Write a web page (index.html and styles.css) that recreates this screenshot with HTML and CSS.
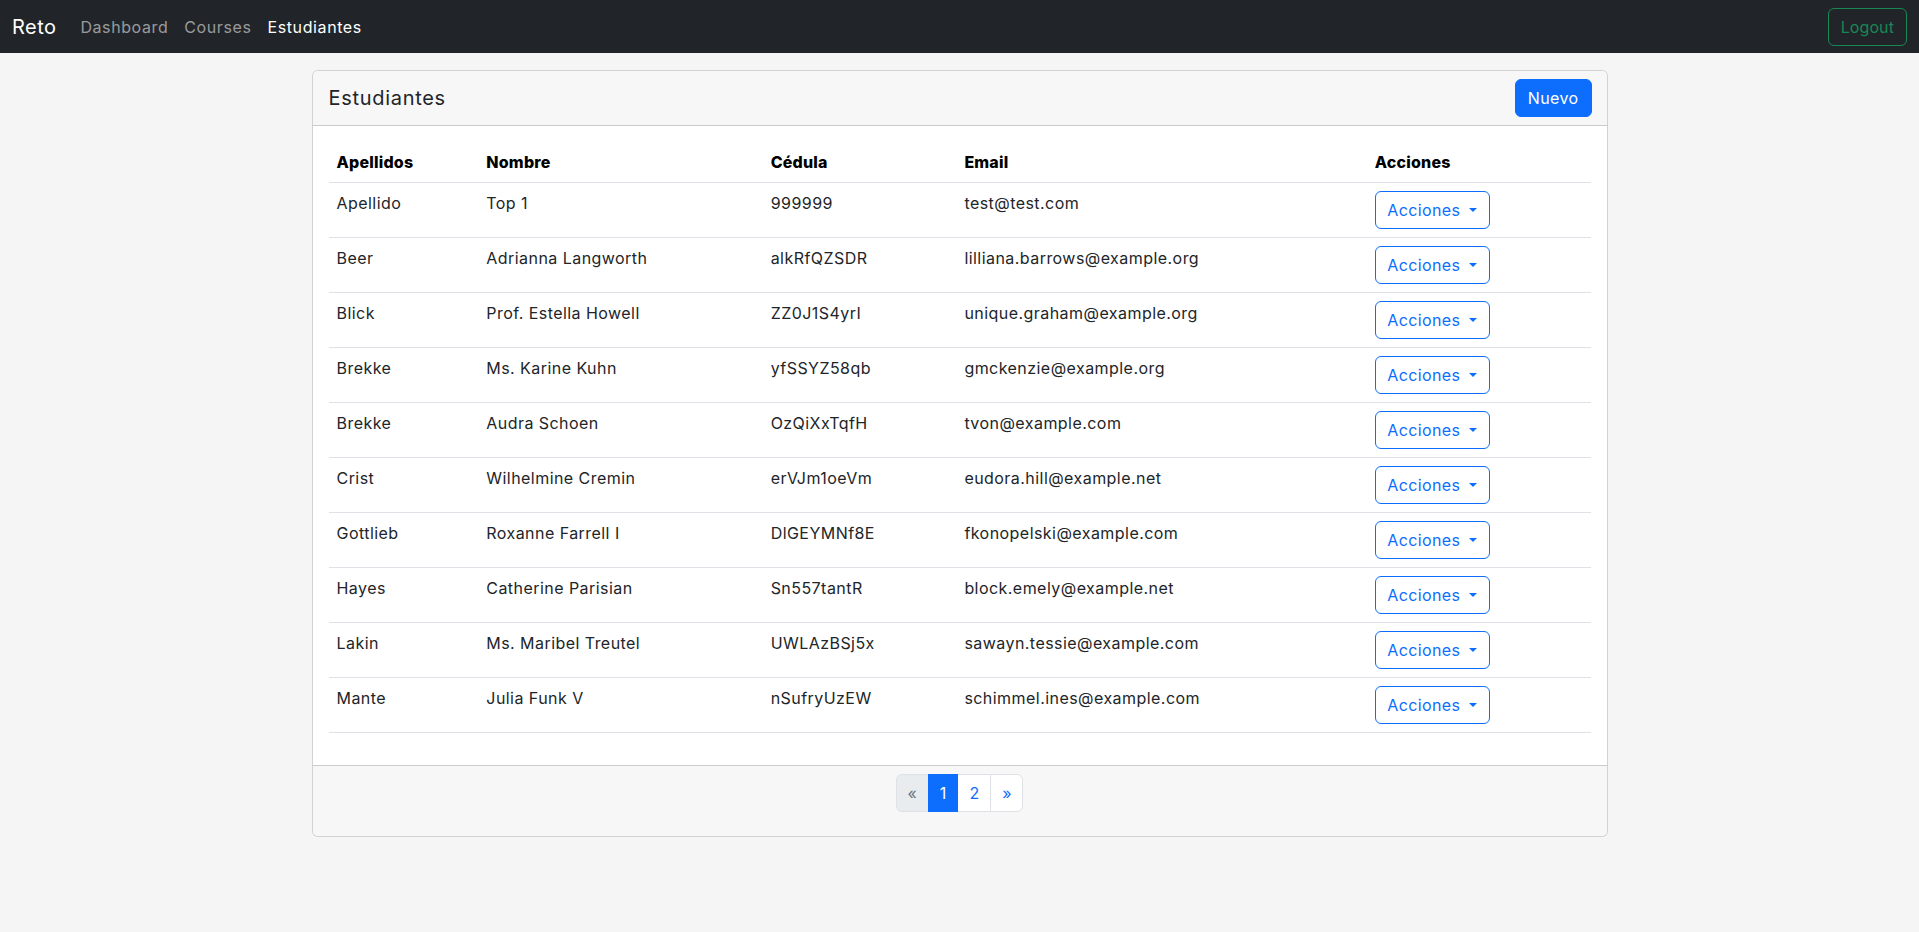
FILE: index.html
```html
<!DOCTYPE html>
<html lang="es">
<head>
<meta charset="utf-8">
<title>Estudiantes</title>
<link rel="stylesheet" href="styles.css">
</head>
<body>
<nav class="navbar">
  <div class="nav-left">
    <a class="brand" href="#">Reto</a>
    <a class="nav-link" href="#">Dashboard</a>
    <a class="nav-link" href="#">Courses</a>
    <a class="nav-link active" href="#">Estudiantes</a>
  </div>
  <button class="btn btn-logout">Logout</button>
</nav>
<main class="container">
  <section class="card">
    <header class="card-header">
      <h5 class="card-title">Estudiantes</h5>
      <button class="btn btn-primary">Nuevo</button>
    </header>
    <div class="card-body">
      <table class="table">
        <colgroup>
          <col class="c1"><col class="c2"><col class="c3"><col class="c4"><col class="c5">
        </colgroup>
        <thead>
          <tr><th>Apellidos</th><th>Nombre</th><th>Cédula</th><th>Email</th><th>Acciones</th></tr>
        </thead>
        <tbody>
          <tr><td>Apellido</td><td>Top 1</td><td>999999</td><td>test@test.com</td><td><button class="btn btn-outline">Acciones<span class="caret"></span></button></td></tr>
          <tr><td>Beer</td><td>Adrianna Langworth</td><td>alkRfQZSDR</td><td>lilliana.barrows@example.org</td><td><button class="btn btn-outline">Acciones<span class="caret"></span></button></td></tr>
          <tr><td>Blick</td><td>Prof. Estella Howell</td><td>ZZ0J1S4yrI</td><td>unique.graham@example.org</td><td><button class="btn btn-outline">Acciones<span class="caret"></span></button></td></tr>
          <tr><td>Brekke</td><td>Ms. Karine Kuhn</td><td>yfSSYZ58qb</td><td>gmckenzie@example.org</td><td><button class="btn btn-outline">Acciones<span class="caret"></span></button></td></tr>
          <tr><td>Brekke</td><td>Audra Schoen</td><td>OzQiXxTqfH</td><td>tvon@example.com</td><td><button class="btn btn-outline">Acciones<span class="caret"></span></button></td></tr>
          <tr><td>Crist</td><td>Wilhelmine Cremin</td><td>erVJm1oeVm</td><td>eudora.hill@example.net</td><td><button class="btn btn-outline">Acciones<span class="caret"></span></button></td></tr>
          <tr><td>Gottlieb</td><td>Roxanne Farrell I</td><td>DlGEYMNf8E</td><td>fkonopelski@example.com</td><td><button class="btn btn-outline">Acciones<span class="caret"></span></button></td></tr>
          <tr><td>Hayes</td><td>Catherine Parisian</td><td>Sn557tantR</td><td>block.emely@example.net</td><td><button class="btn btn-outline">Acciones<span class="caret"></span></button></td></tr>
          <tr><td>Lakin</td><td>Ms. Maribel Treutel</td><td>UWLAzBSj5x</td><td>sawayn.tessie@example.com</td><td><button class="btn btn-outline">Acciones<span class="caret"></span></button></td></tr>
          <tr><td>Mante</td><td>Julia Funk V</td><td>nSufryUzEW</td><td>schimmel.ines@example.com</td><td><button class="btn btn-outline">Acciones<span class="caret"></span></button></td></tr>
        </tbody>
      </table>
    </div>
    <footer class="card-footer">
      <ul class="pagination">
        <li class="page-item disabled"><span class="page-link">&laquo;</span></li>
        <li class="page-item active"><span class="page-link">1</span></li>
        <li class="page-item"><a class="page-link" href="#">2</a></li>
        <li class="page-item"><a class="page-link" href="#">&raquo;</a></li>
      </ul>
    </footer>
  </section>
</main>
</body>
</html>
```
FILE: styles.css
```css
* { box-sizing: border-box; }
html, body { margin: 0; }
body {
  font-family: Inter, "Noto Sans", sans-serif;
  font-size: 16px;
  line-height: 1.5;
  letter-spacing: 0.45px;
  color: #212529;
  background: #f5f5f5;
}
a { text-decoration: none; }

.navbar {
  height: 53px;
  background: #212529;
  display: flex;
  align-items: center;
  justify-content: space-between;
  padding: 0 12px;
}
.nav-left { display: flex; align-items: center; }
.brand {
  color: #fff;
  font-size: 20px;
  margin-right: 16px;
  line-height: 30px;
}
.nav-link {
  color: rgba(255,255,255,.55);
  padding: 8px;
  letter-spacing: 0.6px;
}
.nav-link.active { color: #fff; }

.btn {
  font-family: inherit;
  letter-spacing: 0.4px;
  font-size: 16px;
  line-height: 24px;
  padding: 6px 12px;
  border-radius: 6px;
  border: 1px solid transparent;
  background: transparent;
  cursor: pointer;
  display: inline-flex;
  align-items: center;
}
.btn-logout {
  color: #198754;
  border-color: #198754;
  height: 38px;
  letter-spacing: 0.1px;
}
.btn-primary {
  background: #0d6efd;
  border-color: #0d6efd;
  color: #fff;
  height: 38px;
}
.btn-outline {
  color: #0d6efd;
  border-color: #0d6efd;
  height: 38px;
  width: 115px;
  justify-content: center;
}
.caret {
  display: inline-block;
  margin-left: 9px;
  width: 0; height: 0;
  border-top: 4px solid currentColor;
  border-left: 4px solid transparent;
  border-right: 4px solid transparent;
}

.container {
  max-width: 1320px;
  margin: 17px auto 0;
  padding: 0 12px;
}
.card {
  background: #fff;
  border: 1px solid rgba(0,0,0,.175);
  border-radius: 6px;
  overflow: hidden;
}
.card-header {
  background: #f7f7f7;
  border-bottom: 1px solid rgba(0,0,0,.175);
  padding: 8px 15px 8px 16px;
  display: flex;
  align-items: center;
  justify-content: space-between;
}
.card-title {
  margin: 0;
  font-size: 20px;
  font-weight: 400;
  letter-spacing: 0.7px;
  line-height: 1.2;
}
.card-body { padding: 16px; }
.table {
  width: 100%;
  border-collapse: collapse;
  margin-bottom: 16px;
}
.c1 { width: 150px; }
.c2 { width: 285px; }
.c3 { width: 194px; }
.c4 { width: 411px; }
.c5 { width: 224px; }
.table th, .table td {
  padding: 8px;
  text-align: left;
  vertical-align: top;
  border-bottom: 1px solid #dee2e6;
}
.table th { font-weight: 800; letter-spacing: 0.2px; color: #000; }

.card-footer {
  background: #f7f7f7;
  border-top: 1px solid rgba(0,0,0,.175);
  padding: 8px 16px;
}
.pagination {
  list-style: none;
  margin: 0 0 16px;
  padding: 0;
  display: flex;
  justify-content: center;
}
.page-link {
  display: block;
  padding: 6px 11px;
  line-height: 24px;
  border: 1px solid #dee2e6;
  margin-left: -1px;
  color: #0d6efd;
  background: #fff;
  font-size: 16px;
  letter-spacing: 0;
}
.page-item:first-child .page-link { border-radius: 6px 0 0 6px; margin-left: 0; }
.page-item:last-child .page-link { border-radius: 0 6px 6px 0; }
.page-item.disabled .page-link { color: #6c757d; background: #e9ecef; }
.page-item.active .page-link { background: #0d6efd; border-color: #0d6efd; color: #fff; position: relative; }
```
